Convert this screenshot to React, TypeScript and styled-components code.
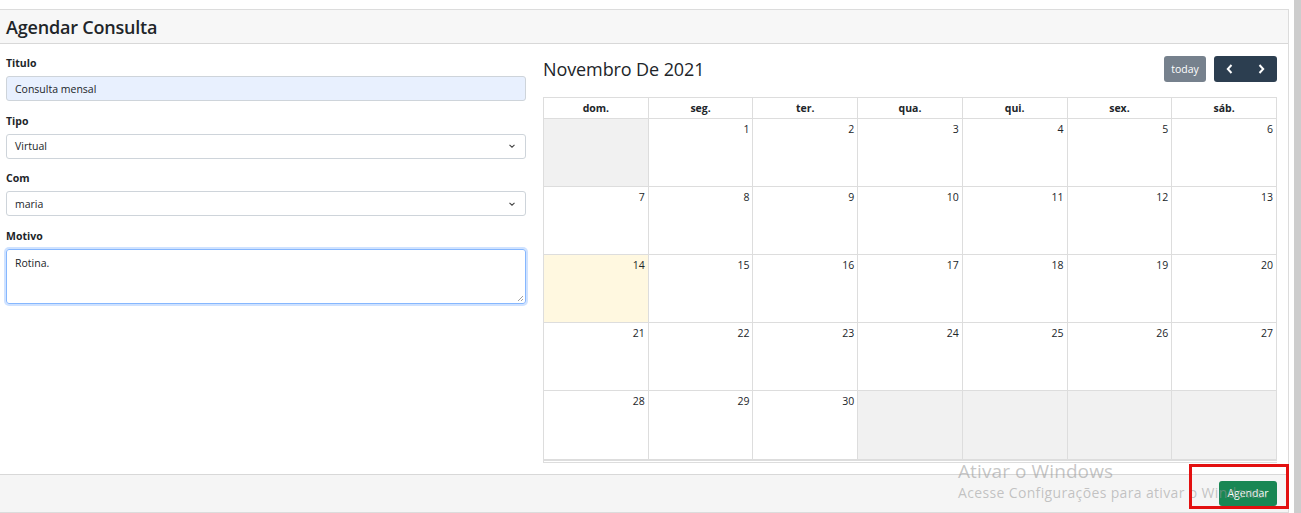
import React from "react";
import styled, { createGlobalStyle } from "styled-components";

const Global = createGlobalStyle`
  html, body { margin: 0; padding: 0; background: #fff; }
  body { font-family: "Open Sans", "Noto Sans", sans-serif; color: #212529; }
  * { box-sizing: border-box; }
`;

const Page = styled.div`
  position: relative;
  width: 1301px;
  height: 513px;
  display: flex;
  overflow: hidden;
`;

const Card = styled.div`
  margin-top: 9px;
  width: 1289px;
  height: 504px;
  border: 1px solid #dcdcdc;
  border-left: none;
  display: flex;
  flex-direction: column;
`;

const Scrollbar = styled.div`
  margin-left: 5px;
  width: 7px;
  background: #cdcdcd;
`;

const Header = styled.div`
  height: 34px;
  background: #f7f7f7;
  border-bottom: 1px solid #d8d8d8;
  display: flex;
  align-items: center;
  padding: 0 6px;
`;

const Title = styled.h1`
  margin: 0;
  font-size: 18px;
  font-weight: 600;
  letter-spacing: -0.2px;
  color: #212529;
`;

const Body = styled.div`
  flex: 1;
  display: flex;
  gap: 17px;
  padding: 13px 11px 0 6px;
`;

const FormCol = styled.div`
  width: 520px;
  display: flex;
  flex-direction: column;
`;

const Label = styled.label`
  display: block;
  font-size: 10.5px;
  font-weight: 700;
  height: 13px;
  line-height: 13px;
  margin: 0 0 6px;
`;

const Field = styled.div`
  margin-bottom: 13.5px;
`;

const Input = styled.div<{ $autofill?: boolean }>`
  height: 25px;
  border: 1px solid #ced4da;
  border-radius: 3px;
  background: ${(p) => (p.$autofill ? "#e8f0fe" : "#fff")};
  font-size: 10.5px;
  display: flex;
  align-items: center;
  padding: 0 8px;
  justify-content: space-between;
  color: #212529;
`;

const TextArea = styled.div`
  position: relative;
  height: 55px;
  border: 1px solid #86b7fe;
  border-radius: 3px;
  box-shadow: 0 0 0 2px rgba(13, 110, 253, 0.2);
  font-size: 10.5px;
  padding: 6px 8px;
`;

const Grip = styled.svg`
  position: absolute;
  right: 1px;
  bottom: 1px;
`;

const CalCol = styled.div`
  width: 734px;
  display: flex;
  flex-direction: column;
`;

const Toolbar = styled.div`
  height: 28px;
  display: flex;
  align-items: center;
  justify-content: space-between;
  margin-bottom: 14px;
  margin-top: -2px;
`;

const CalTitle = styled.h2`
  margin: 0;
  font-size: 18px;
  font-weight: 400;
  letter-spacing: -0.1px;
  color: #212529;
`;

const BtnRow = styled.div`
  display: flex;
  gap: 8px;
`;

const TodayBtn = styled.div`
  width: 42px;
  height: 26px;
  border-radius: 3px;
  background: #76818d;
  color: #fff;
  font-size: 10.5px;
  display: flex;
  align-items: center;
  justify-content: center;
`;

const NavGroup = styled.div`
  width: 63px;
  height: 26px;
  border-radius: 3px;
  background: #2c3e50;
  display: flex;
`;

const NavBtn = styled.div`
  flex: 1;
  display: flex;
  align-items: center;
  justify-content: center;
`;

const Grid = styled.div`
  display: grid;
  grid-template-columns: repeat(7, 1fr);
  grid-template-rows: 21px repeat(4, 68px) 69px;
  border-top: 1px solid #ddd;
  border-left: 1px solid #ddd;
  border-bottom: 3px double #ddd;
`;

const HeadCell = styled.div`
  border-right: 1px solid #ddd;
  border-bottom: 1px solid #ddd;
  font-size: 10.5px;
  font-weight: 700;
  display: flex;
  align-items: center;
  justify-content: center;
`;

const DayCell = styled.div<{ $other?: boolean; $today?: boolean }>`
  border-right: 1px solid #ddd;
  border-bottom: 1px solid #ddd;
  background: ${(p) => (p.$other ? "#f1f1f1" : p.$today ? "#fff8e0" : "#fff")};
  font-size: 10.5px;
  text-align: right;
  padding: 3px 3px 0 0;
  line-height: 14px;
`;

const Footer = styled.div`
  height: 38px;
  background: #f5f5f5;
  border-top: 1px solid #d8d8d8;
  display: flex;
  align-items: center;
  justify-content: flex-end;
  padding-right: 11px;
`;

const SubmitBtn = styled.div`
  width: 58px;
  height: 25px;
  border-radius: 3px;
  background: #198754;
  color: #fff;
  font-size: 10.5px;
  display: flex;
  align-items: center;
  justify-content: center;
  margin-top: -1px;
`;

const Highlight = styled.div`
  position: absolute;
  left: 1189px;
  top: 464px;
  width: 100px;
  height: 45px;
  border: 3px solid #e31010;
  pointer-events: none;
`;

const Watermark = styled.div`
  position: absolute;
  left: 958px;
  top: 459px;
  color: rgba(150, 150, 150, 0.55);
  pointer-events: none;
  font-family: "Open Sans", "Noto Sans", sans-serif;
`;

const WmTitle = styled.div`
  font-size: 19px;
  line-height: 24px;
  letter-spacing: 0.1px;
`;

const WmSub = styled.div`
  font-size: 14px;
  line-height: 20px;
  letter-spacing: 0.35px;
`;

const Chevron = () => (
  <svg width="10" height="10" viewBox="0 0 10 10">
    <path d="M2.5 3.8 L5 6.2 L7.5 3.8" fill="none" stroke="#444" strokeWidth="1.1" />
  </svg>
);

const Arrow = ({ dir }: { dir: "l" | "r" }) => (
  <svg width="10" height="12" viewBox="0 0 10 12">
    <path
      d={dir === "l" ? "M6.5 2 L2.8 6 L6.5 10" : "M3.5 2 L7.2 6 L3.5 10"}
      fill="none"
      stroke="#fff"
      strokeWidth="2"
    />
  </svg>
);

const days = ["dom.", "seg.", "ter.", "qua.", "qui.", "sex.", "sáb."];

export default function App() {
  const cells: { n: number | null }[] = [];
  cells.push({ n: null });
  for (let d = 1; d <= 30; d++) cells.push({ n: d });
  while (cells.length < 35) cells.push({ n: null });

  return (
    <>
      <Global />
      <Page>
        <Card>
          <Header>
            <Title>Agendar Consulta</Title>
          </Header>
          <Body>
            <FormCol>
              <Field>
                <Label>Titulo</Label>
                <Input $autofill>Consulta mensal</Input>
              </Field>
              <Field>
                <Label>Tipo</Label>
                <Input>
                  Virtual
                  <Chevron />
                </Input>
              </Field>
              <Field>
                <Label>Com</Label>
                <Input>
                  maria
                  <Chevron />
                </Input>
              </Field>
              <Field>
                <Label>Motivo</Label>
                <TextArea>
                  Rotina.
                  <Grip width="7" height="7" viewBox="0 0 7 7">
                    <path d="M6 1 L1 6 M6 4 L4 6" stroke="#888" strokeWidth="0.8" />
                  </Grip>
                </TextArea>
              </Field>
            </FormCol>
            <CalCol>
              <Toolbar>
                <CalTitle>Novembro De 2021</CalTitle>
                <BtnRow>
                  <TodayBtn>today</TodayBtn>
                  <NavGroup>
                    <NavBtn>
                      <Arrow dir="l" />
                    </NavBtn>
                    <NavBtn>
                      <Arrow dir="r" />
                    </NavBtn>
                  </NavGroup>
                </BtnRow>
              </Toolbar>
              <Grid>
                {days.map((d) => (
                  <HeadCell key={d}>{d}</HeadCell>
                ))}
                {cells.map((c, i) => (
                  <DayCell key={i} $other={c.n === null} $today={c.n === 14}>
                    {c.n}
                  </DayCell>
                ))}
              </Grid>
            </CalCol>
          </Body>
          <Footer>
            <SubmitBtn>Agendar</SubmitBtn>
          </Footer>
        </Card>
        <Scrollbar />
        <Watermark>
          <WmTitle>Ativar o Windows</WmTitle>
          <WmSub>Acesse Configurações para ativar o Windows.</WmSub>
        </Watermark>
        <Highlight />
      </Page>
    </>
  );
}
